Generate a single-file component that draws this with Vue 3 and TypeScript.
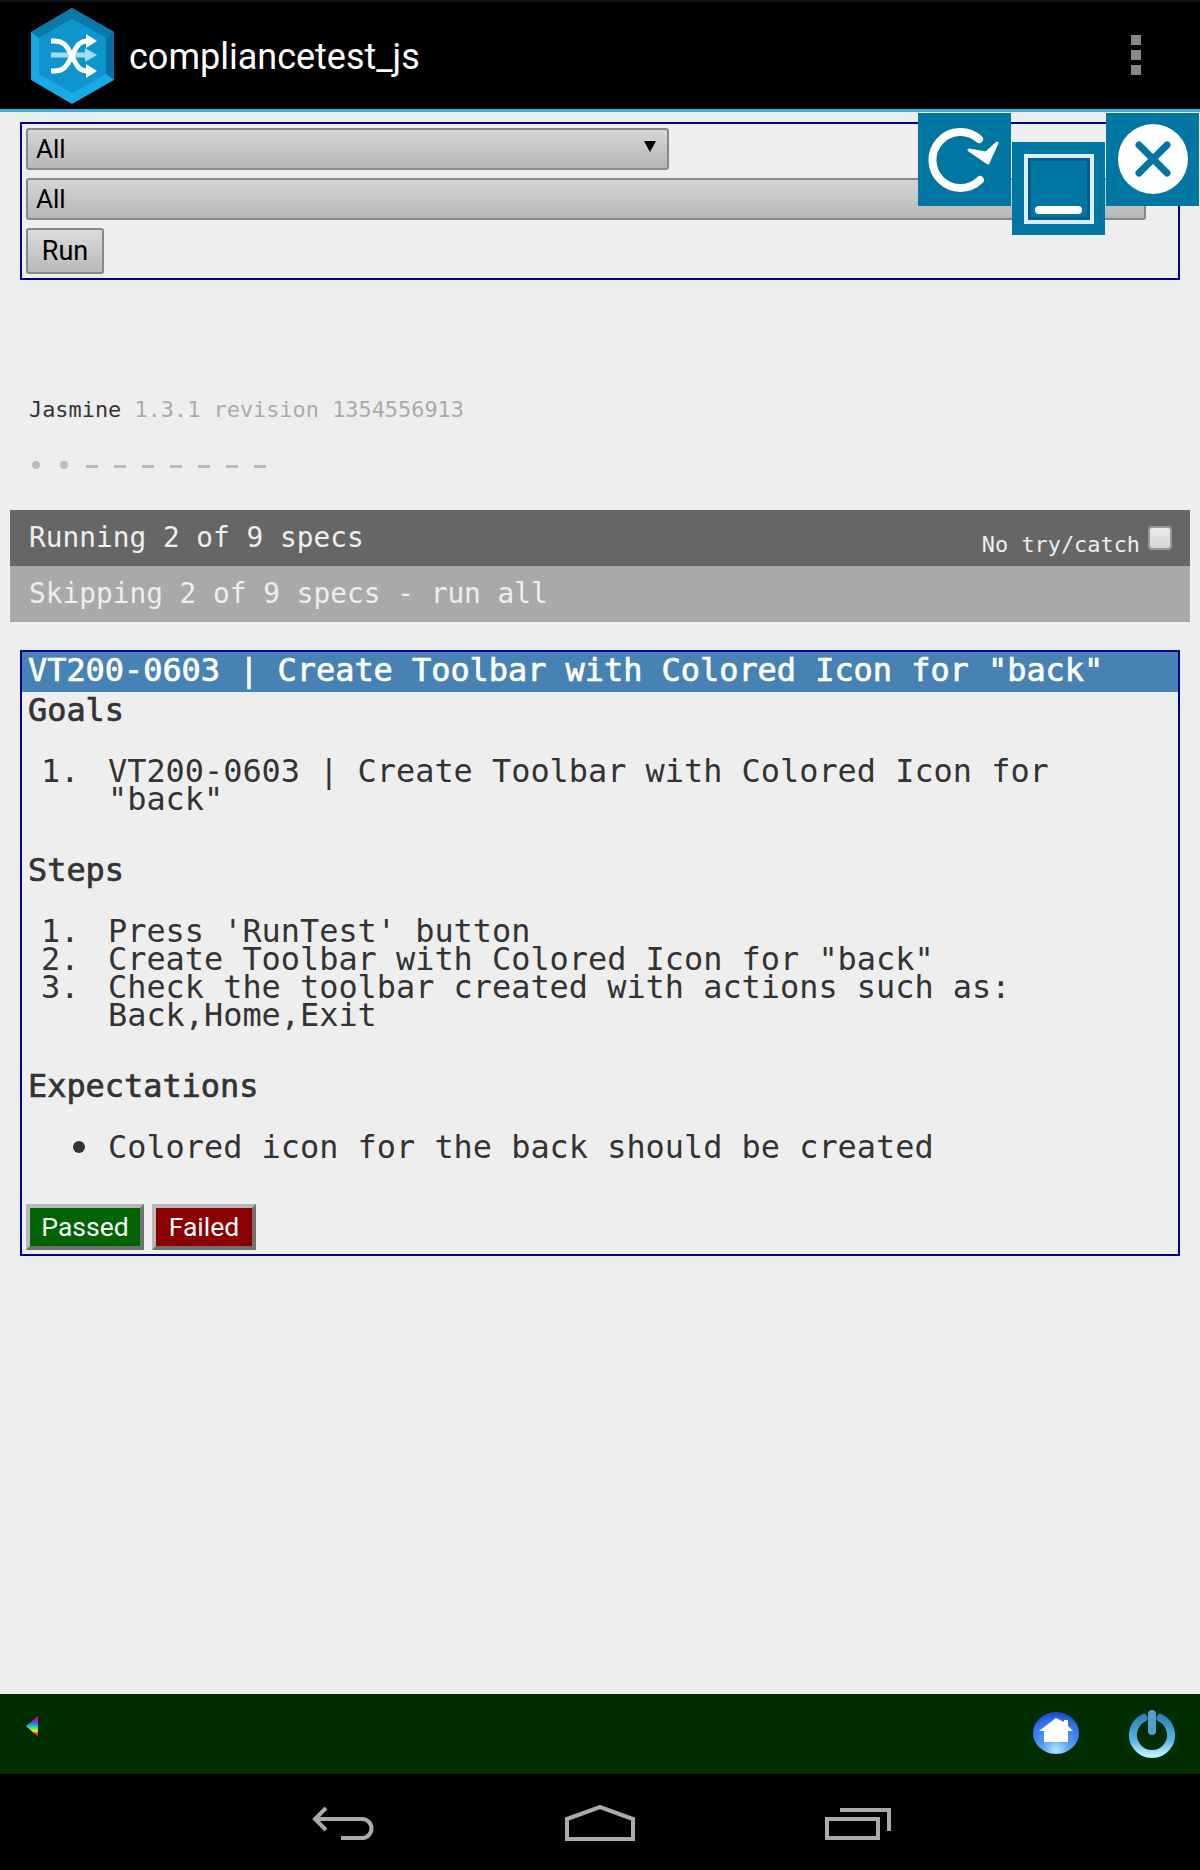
<script setup lang="ts">
const suiteOptions: string[] = ['All'];
const specOptions: string[] = ['All'];
const goals: string[] = ['VT200-0603 | Create Toolbar with Colored Icon for "back"'];
const steps: string[] = [
  "Press 'RunTest' button",
  'Create Toolbar with Colored Icon for "back"',
  'Check the toolbar created with actions such as: Back,Home,Exit',
];
const expectations: string[] = ['Colored icon for the back should be created'];
const symbols: string[] = ['dot', 'dot', 'dash', 'dash', 'dash', 'dash', 'dash', 'dash', 'dash'];
</script>

<template>
  <div class="screen">
    <header class="action-bar">
      <svg class="logo" width="83" height="96" viewBox="31 8 83 96">
        <polygon points="72,8 114,32 114,80 72,104 31,80 31,32" fill="#19a9e5" />
        <polygon points="72,8 114,32 106,38 72,19 39,38 31,32" fill="#0a78a8" />
        <polygon points="114,32 114,80 106,74 106,38" fill="#086f9e" />
        <polygon points="72,19 106,38 106,74 72,93 39,74 39,38" fill="#0e95ce" />
        <path d="M51 55 H88" fill="none" stroke="#a5dcf2" stroke-width="5" />
        <polygon points="85,48 97,55 85,62" fill="#a5dcf2" />
        <path d="M51 41 H54 C66 41 68 49 72 56 C76 64 78 71 88 71" fill="none" stroke="#fff" stroke-width="5" />
        <path d="M51 71 H54 C66 71 68 63 72 56 C76 48 78 41 88 41" fill="none" stroke="#fff" stroke-width="5" />
        <polygon points="86,34 97,41 86,48" fill="#fff" />
        <polygon points="86,64 97,71 86,78" fill="#fff" />
      </svg>
      <span class="app-title">compliancetest_js</span>
      <div class="overflow">
        <i></i>
        <i></i>
        <i></i>
      </div>
    </header>

    <main class="content">
      <form class="runner-form" @submit.prevent>
        <div class="select-wrap first">
          <select class="native-select">
            <option v-for="item in suiteOptions" :key="item">{{ item }}</option>
          </select>
        </div>
        <div class="select-wrap second">
          <select class="native-select">
            <option v-for="item in specOptions" :key="item">{{ item }}</option>
          </select>
        </div>
        <button class="run-btn" type="submit">Run</button>
      </form>

      <div class="float-btn refresh">
        <svg width="93" height="93" viewBox="0 0 93 93">
          <path d="M61 26 A28 28 0 1 0 62 67" fill="none" stroke="#fff" stroke-width="8" stroke-linecap="round" />
          <polygon points="51,37 62,39 68,40 79,30 70,50" fill="#fff" stroke="#fff" stroke-width="3" stroke-linejoin="round" />
        </svg>
      </div>
      <div class="float-btn minimize">
        <svg width="93" height="93" viewBox="0 0 93 93">
          <rect x="17" y="17" width="60" height="60" fill="none" stroke="#005f8f" stroke-width="4" />
          <rect x="14" y="14" width="66" height="66" fill="none" stroke="#dcedf3" stroke-width="4" />
          <rect x="23" y="64" width="47" height="8" rx="4" fill="#fff" />
        </svg>
      </div>
      <div class="float-btn close">
        <svg width="93" height="93" viewBox="0 0 93 93">
          <circle cx="47" cy="46" r="35" fill="#fff" />
          <path d="M33 32 L61 60 M61 32 L33 60" stroke="#0077a3" stroke-width="7" stroke-linecap="round" />
        </svg>
      </div>

      <div class="jasmine-banner">
        <span class="brand">Jasmine</span>{{ ' ' }}<span class="version">1.3.1 revision 1354556913</span>
      </div>

      <ul class="symbol-summary">
        <li v-for="(s, i) in symbols" :key="i" :class="s"></li>
      </ul>

      <div class="bar running">
        <span>Running 2 of 9 specs</span>
        <span class="try-catch">
          <label>No try/catch</label>
          <input class="fake-check" type="checkbox" />
        </span>
      </div>
      <div class="bar skipping">Skipping 2 of 9 specs - run all</div>

      <section class="test-box">
        <h2 class="test-title">VT200-0603 | Create Toolbar with Colored Icon for "back"</h2>

        <h3 class="section-head">Goals</h3>
        <ol class="num-list">
          <li v-for="g in goals" :key="g"><span>{{ g }}</span></li>
        </ol>

        <h3 class="section-head">Steps</h3>
        <ol class="num-list">
          <li v-for="s in steps" :key="s"><span>{{ s }}</span></li>
        </ol>

        <h3 class="section-head">Expectations</h3>
        <ul class="bullet-list">
          <li v-for="e in expectations" :key="e"><span>{{ e }}</span></li>
        </ul>

        <div class="result-row">
          <button class="result passed" type="button">Passed</button>
          <button class="result failed" type="button">Failed</button>
        </div>
      </section>
    </main>

    <footer class="tool-bar">
      <svg class="back-tri" width="12" height="21" viewBox="0 0 12 21">
        <defs>
          <linearGradient id="rainbow" x1="0" y1="0" x2="0" y2="1">
            <stop offset="0" stop-color="#f0105a" />
            <stop offset="0.25" stop-color="#8a20e0" />
            <stop offset="0.42" stop-color="#10a0f0" />
            <stop offset="0.55" stop-color="#20f080" />
            <stop offset="0.72" stop-color="#e8f000" />
            <stop offset="0.85" stop-color="#f02010" />
            <stop offset="1" stop-color="#e01010" />
          </linearGradient>
        </defs>
        <polygon points="12,0 0,10 12,21" fill="url(#rainbow)" />
      </svg>
      <div class="tool-right">
        <svg width="48" height="48" viewBox="0 0 48 48">
          <defs>
            <radialGradient id="globe" cx="0.5" cy="0.9" r="0.85">
              <stop offset="0" stop-color="#b4e4ff" />
              <stop offset="0.35" stop-color="#5aa0f8" />
              <stop offset="0.85" stop-color="#2f6ee8" />
              <stop offset="1" stop-color="#1a4fc8" />
            </radialGradient>
          </defs>
          <ellipse cx="24" cy="23" rx="23" ry="21" fill="url(#globe)" />
          <polygon points="24,8 32,12 32,10 36,10 36,16 41,21 36,21 36,32 12,32 12,21 7,21" fill="#fff" />
        </svg>
        <svg width="48" height="48" viewBox="0 0 48 48">
          <defs>
            <linearGradient id="power" x1="0" y1="0" x2="0" y2="1">
              <stop offset="0" stop-color="#2f86b8" />
              <stop offset="0.65" stop-color="#5cb8ea" />
              <stop offset="1" stop-color="#b8ecff" />
            </linearGradient>
          </defs>
          <path d="M15.5 8 A19 19 0 1 0 32.5 8" fill="none" stroke="url(#power)" stroke-width="8" stroke-linecap="round" />
          <rect x="20" y="0" width="8" height="25" rx="4" fill="#4f9fd0" />
        </svg>
      </div>
    </footer>

    <nav class="nav-bar">
      <svg width="64" height="40" viewBox="0 0 64 40">
        <path d="M14 1 L3 12 L14 23" fill="none" stroke="#aaa" stroke-width="4" />
        <path d="M3 12 H50 A9.5 9.5 0 0 1 50 31 H29" fill="none" stroke="#aaa" stroke-width="4" />
      </svg>
      <svg class="nav-home" width="70" height="40" viewBox="0 0 70 40">
        <polygon points="2,14 35,2 68,14 68,34 2,34" fill="none" stroke="#aaa" stroke-width="4" />
      </svg>
      <svg width="66" height="40" viewBox="0 0 66 40">
        <rect x="2" y="12" width="51" height="19" fill="none" stroke="#aaa" stroke-width="4" />
        <path d="M15 3 H64 V24" fill="none" stroke="#aaa" stroke-width="4" />
      </svg>
    </nav>
  </div>
</template>

<style scoped>
.screen {
  width: 1200px;
  height: 1870px;
  display: flex;
  flex-direction: column;
  background: #eee;
  font-family: "DejaVu Sans Mono", "Liberation Mono", monospace;
  overflow: hidden;
}

.action-bar {
  height: 106px;
  flex: none;
  display: flex;
  align-items: center;
  background: #000;
  border-bottom: 3px solid #33b5e5;
  padding: 3px 59px 0 31px;
  box-shadow: inset 0 2px #111;
  color: #fff;
}

.logo {
  flex: none;
  margin-right: 15px;
}

.app-title {
  font-family: Roboto, "Liberation Sans", sans-serif;
  font-size: 36px;
  flex: 1;
  padding-top: 1px;
}

.overflow {
  display: flex;
  flex-direction: column;
  gap: 5px;
  margin-top: -3px;
}

.overflow i {
  display: block;
  width: 10px;
  height: 10px;
  background: #888;
}

.content {
  flex: 1;
  position: relative;
  min-height: 0;
}

.runner-form {
  margin: 10px 20px 0;
  height: 158px;
  box-sizing: border-box;
  border: 2px solid #00008b;
  padding: 4px;
  display: flex;
  flex-direction: column;
  align-items: flex-start;
  gap: 8px;
}

.select-wrap {
  position: relative;
  height: 42px;
}

.select-wrap.first {
  width: 643px;
}

.select-wrap.second {
  width: 1120px;
}

.select-wrap::after {
  content: "";
  position: absolute;
  right: 13px;
  top: 13px;
  border-left: 6px solid transparent;
  border-right: 6px solid transparent;
  border-top: 11px solid #000;
}

.native-select {
  appearance: none;
  width: 100%;
  height: 100%;
  box-sizing: border-box;
  margin: 0;
  border: 2px solid #888;
  border-radius: 3px;
  padding: 0 8px;
  background: linear-gradient(#d6d6d6, #b6b6b6);
  font-family: Roboto, "Liberation Sans", sans-serif;
  font-size: 26px;
  color: #000;
}

.run-btn {
  width: 78px;
  height: 46px;
  box-sizing: border-box;
  margin: 0;
  padding: 0;
  border: 2px solid #888;
  border-radius: 3px;
  background: linear-gradient(#dcdcdc, #b8b8b8);
  font-family: Roboto, "Liberation Sans", sans-serif;
  font-size: 27px;
  color: #000;
}

.float-btn {
  position: absolute;
  width: 93px;
  height: 93px;
  background: #0077a3;
}

.float-btn svg {
  display: block;
}

.refresh {
  left: 918px;
  top: 1px;
}

.minimize {
  left: 1012px;
  top: 30px;
}

.close {
  left: 1106px;
  top: 1px;
}

.jasmine-banner {
  margin-top: 116px;
  padding-left: 29px;
  font-size: 21.9px;
  line-height: 28px;
  color: #333;
}

.version {
  color: #aaa;
}

.symbol-summary {
  list-style: none;
  margin: 27px 0 0;
  padding: 0 0 0 22px;
  display: flex;
  height: 28px;
  align-items: center;
}

.symbol-summary li {
  width: 28px;
  height: 16px;
  display: flex;
  align-items: center;
  justify-content: center;
}

.symbol-summary li::before {
  content: "";
  display: block;
  background: #bbb;
}

.symbol-summary li.dot::before {
  width: 8px;
  height: 8px;
  border-radius: 50%;
}

.symbol-summary li.dash::before {
  width: 12px;
  height: 3px;
  margin-top: 3px;
}

.bar {
  margin: 0 10px;
  height: 56px;
  box-sizing: border-box;
  padding: 0 18px 2px 19px;
  display: flex;
  align-items: center;
  justify-content: space-between;
  font-size: 27.8px;
  color: #eee;
}

.running {
  margin-top: 31px;
  background: #666;
}

.skipping {
  background: #a9a9a9;
}

.try-catch {
  display: flex;
  align-items: flex-start;
  font-size: 21.9px;
  color: #eee;
  height: 54px;
  padding-top: 16px;
  box-sizing: border-box;
}

.try-catch label {
  margin-top: 6px;
}

.fake-check {
  appearance: none;
  width: 24px;
  height: 24px;
  margin: 0 0 0 8px;
  box-sizing: border-box;
  border: 2px solid #999;
  border-radius: 4px;
  background: linear-gradient(#ececec, #d4d4d4);
}

.test-box {
  margin: 28px 20px 0;
  height: 606px;
  box-sizing: border-box;
  border: 2px solid #00008b;
}

.test-title {
  margin: 0;
  height: 40px;
  line-height: 37px;
  padding-left: 6px;
  background: #4682b4;
  color: #fff;
  font-size: 31.9px;
  font-weight: normal;
  -webkit-text-stroke: 0.7px currentColor;
  white-space: nowrap;
}

.section-head {
  margin: 0;
  padding-left: 6px;
  height: 36px;
  line-height: 36px;
  font-size: 31.9px;
  font-weight: normal;
  -webkit-text-stroke: 0.7px currentColor;
  color: #333;
}

.num-list,
.bullet-list {
  list-style: none;
  margin: 29px 0 39px;
  padding: 0 100px 0 19px;
  counter-reset: item;
  font-size: 31.9px;
  line-height: 28px;
  color: #333;
}

.num-list li,
.bullet-list li {
  display: flex;
}

.num-list li {
  counter-increment: item;
}

.num-list li::before {
  content: counter(item) ".";
  flex: none;
  width: 67px;
}

.bullet-list li::before {
  content: "";
  flex: none;
  width: 12px;
  height: 12px;
  border-radius: 50%;
  background: #333;
  margin: 8px 23px 0 32px;
}

.bullet-list {
  margin-bottom: 43px;
}

.result-row {
  display: flex;
  gap: 8px;
  padding-left: 4px;
}

.result {
  height: 46px;
  box-sizing: border-box;
  margin: 0;
  padding: 0 0 2px;
  border: 4px solid;
  border-color: #b8b8b8 #707070 #707070 #b8b8b8;
  font-family: Roboto, "Liberation Sans", sans-serif;
  font-size: 26.5px;
  color: #fff;
}

.passed {
  width: 118px;
  background: #006400;
}

.failed {
  width: 104px;
  background: #8b0000;
}

.tool-bar {
  height: 80px;
  flex: none;
  background: #002e00;
  display: flex;
  justify-content: space-between;
  align-items: flex-start;
  padding: 22px 24px 0 26px;
  box-sizing: border-box;
}

.back-tri {
  display: block;
}

.tool-right {
  display: flex;
  gap: 48px;
  margin-top: -6px;
}

.nav-bar {
  height: 96px;
  flex: none;
  background: #000;
  display: flex;
  justify-content: center;
  align-items: flex-start;
  gap: 189.5px;
  padding: 33px 0 0 3px;
  box-sizing: border-box;
}

.nav-home {
  margin: -2px 1px 0 -1px;
}
</style>
